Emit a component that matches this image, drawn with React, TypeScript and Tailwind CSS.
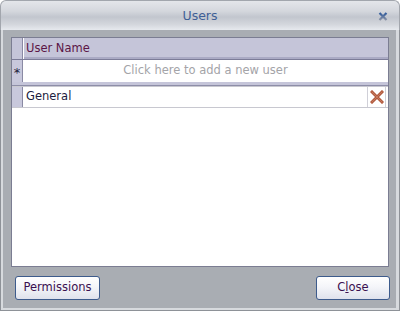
const font = { fontFamily: '"DejaVu Sans", Verdana, sans-serif' }

function DeleteIcon() {
  return (
    <svg width="14" height="14" viewBox="0 0 14 14">
      <path d="M2 2 L12 12 M12 2 L2 12" stroke="#b25a3e" strokeWidth="3" strokeLinecap="square" />
      <path d="M2 2 L12 12 M12 2 L2 12" stroke="#d8967a" strokeWidth="1" strokeLinecap="square" opacity="0.5" />
    </svg>
  )
}

function TitleClose() {
  return (
    <svg width="10" height="9" viewBox="0 0 10 9">
      <defs>
        <linearGradient id="tx" x1="0" y1="0" x2="0" y2="1">
          <stop offset="0" stopColor="#2f5a9c" />
          <stop offset="1" stopColor="#8b93a6" />
        </linearGradient>
      </defs>
      <path d="M1.5 1 L8.5 8 M8.5 1 L1.5 8" stroke="url(#tx)" strokeWidth="2.2" />
    </svg>
  )
}

export default function App() {
  return (
    <div className="w-[400px] h-[311px] flex flex-col bg-white text-[11.5px]" style={font}>
      {/* title bar */}
      <div className="h-[30px] shrink-0 rounded-t-[6px] border border-b-0 border-[#a2a6ad] bg-[linear-gradient(#e4e6ea_0%,#d4d7dd_35%,#c2c6ce_55%,#d3d6dc_80%,#e6e9ee_100%)] flex items-center relative">
        <div className="flex-1 text-center text-[#3f5f96] text-[12.5px] pt-[1px]">Users</div>
        <div className="absolute right-[11px] top-[11px]">
          <TitleClose />
        </div>
      </div>

      {/* body */}
      <div className="flex-1 flex flex-col border-x border-b border-[#8e9298]">
        <div className="flex-1 flex flex-col border-x-[2px] border-b-[2px] border-[#d7dade] bg-[#a9adb3] border-r-[3px]">
          <div className="flex-1 flex flex-col pl-[8px] pr-[7px] pt-[7px]">
            {/* grid */}
            <div className="h-[230px] border border-[#7b7d92] bg-white flex flex-col">
              {/* header */}
              <div className="h-[22px] flex shrink-0 bg-[#c5c5d9] border-b border-[#7c7c98]">
                <div className="w-[11px] border-r border-[#8a8aa4]" />
                <div className="flex-1 flex flex-col border-l border-white">
                  <div className="flex-1 flex items-center pl-[2px] pt-[2px] text-[#5c1646]">User Name</div>
                  <div className="h-[3px] bg-[#aaaac4]" />
                </div>
              </div>
              {/* new row */}
              <div className="h-[22px] flex shrink-0">
                <div className="w-[11px] bg-[#c8c8dc] border-r border-[#8a8aa4] flex items-center justify-center text-[#20203a] text-[13px] pt-[4px]">
                  *
                </div>
                <div className="flex-1 flex items-center justify-center text-[#a4a4a8]">
                  Click here to add a new user
                </div>
              </div>
              <div className="h-[4px] shrink-0 bg-[#c5c5d9] border-b border-[#8e8ea8]" />
              <div className="h-[1px] shrink-0 bg-[#c8c8d0]" />
              {/* data row */}
              <div className="h-[21px] flex shrink-0 border-b border-[#c8c8d0]">
                <div className="w-[11px] bg-[#c8c8dc] border-r border-[#8a8aa4]" />
                <div className="flex-1 flex items-center pl-[3px] text-[#1c1c40]">General</div>
                <div className="w-[19px] border-x border-[#d0d0d8] flex items-center justify-center">
                  <DeleteIcon />
                </div>
                <div className="w-[2px]" />
              </div>
            </div>

            {/* buttons */}
            <div className="flex justify-between mt-[9px] pl-[4px] mr-[-1px]">
              <button className="w-[85px] h-[24px] rounded-[3px] border border-[#3d5b8c] bg-[linear-gradient(#ffffff_0%,#f4f5f9_45%,#dfe2ec_100%)] text-[#3a1050] leading-none">
                Permissions
              </button>
              <button className="w-[74px] h-[24px] rounded-[3px] border border-[#3d5b8c] bg-[linear-gradient(#ffffff_0%,#f4f5f9_45%,#dfe2ec_100%)] text-[#3a1050] leading-none">
                C<span className="underline">l</span>ose
              </button>
            </div>
          </div>
        </div>
      </div>
    </div>
  )
}
